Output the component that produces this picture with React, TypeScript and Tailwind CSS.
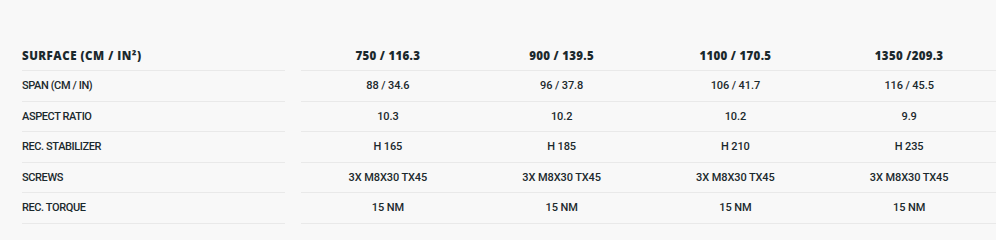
const rows: [string, string[]][] = [
  ["SPAN (CM / IN)", ["88 / 34.6", "96 / 37.8", "106 / 41.7", "116 / 45.5"]],
  ["ASPECT RATIO", ["10.3", "10.2", "10.2", "9.9"]],
  ["REC. STABILIZER", ["H 165", "H 185", "H 210", "H 235"]],
  ["SCREWS", ["3X M8X30 TX45", "3X M8X30 TX45", "3X M8X30 TX45", "3X M8X30 TX45"]],
  ["REC. TORQUE", ["15 NM", "15 NM", "15 NM", "15 NM"]],
];

const head = ["750 / 116.3", "900 / 139.5", "1100 / 170.5", "1350 /209.3"];

export default function App() {
  return (
    <div className="w-[996px] h-[240px] bg-[#f8f8f8] pt-[40.4px] pl-[22px] text-[#1b292d] overflow-hidden">
      <div className="flex h-[30.6px]">
        <div className="w-[263px] border-b border-[#e9e9e9] flex items-center font-['Open_Sans',sans-serif] font-extrabold text-[11.5px] tracking-[0.5px] pt-[1px]">
          SURFACE (CM / IN²)
        </div>
        <div className="w-[16px]" />
        <div className="flex-1 grid grid-cols-4 border-b border-[#e9e9e9]">
          {head.map((h) => (
            <div key={h} className="flex items-center justify-center font-['Open_Sans',sans-serif] font-extrabold text-[11.5px] tracking-[0.3px] pt-[1px]">
              {h}
            </div>
          ))}
        </div>
      </div>
      {rows.map(([label, vals]) => (
        <div key={label} className="flex h-[30.6px] font-['Roboto',sans-serif] font-medium text-[11px] tracking-[-0.4px]">
          <div className="w-[263px] border-b border-[#e9e9e9] flex items-center pt-[1px]">{label}</div>
          <div className="w-[16px]" />
          <div className="flex-1 grid grid-cols-4 border-b border-[#e9e9e9]">
            {vals.map((v, i) => (
              <div key={i} className="flex items-center justify-center pt-[1px] tracking-[-0.1px]">
                {v}
              </div>
            ))}
          </div>
        </div>
      ))}
    </div>
  );
}
